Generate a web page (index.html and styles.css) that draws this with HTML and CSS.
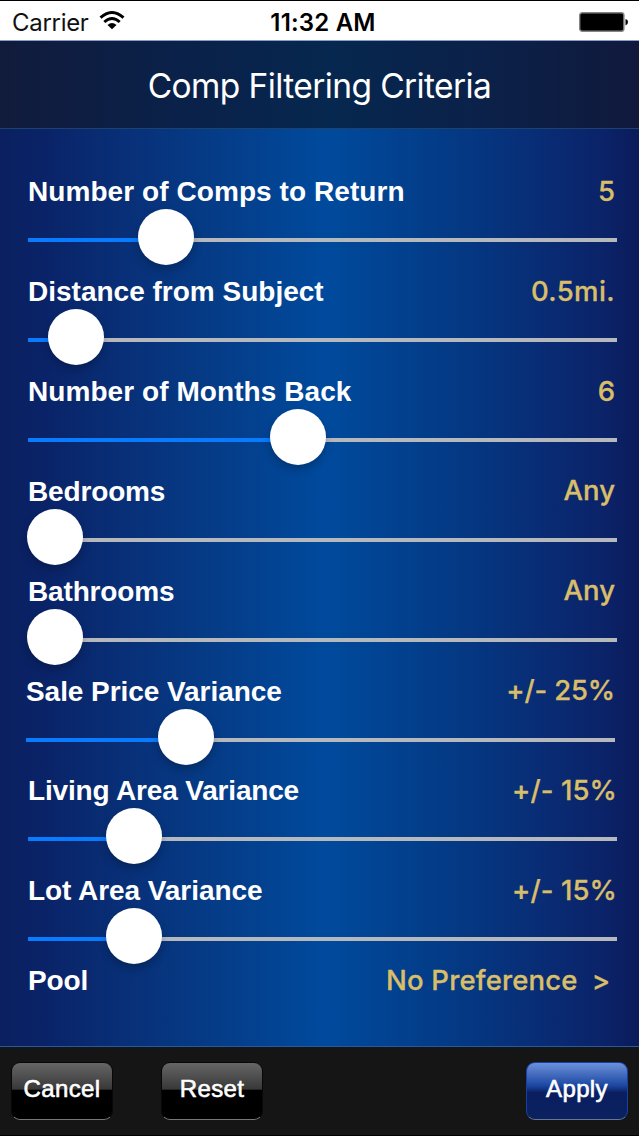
FILE: index.html
```html
<!DOCTYPE html>
<html lang="en">
<head>
<meta charset="utf-8">
<title>Comp Filtering Criteria</title>
<link rel="stylesheet" href="styles.css">
</head>
<body>
<div class="screen">
  <div class="status">
    <div class="carrier"><span>Carrier</span>
      <svg class="wifi" width="26" height="19" viewBox="0 0 26 19"><path d="M1.500 6.600Q13-3.600 24.500 6.600" fill="none" stroke="#000" stroke-width="2.900"/><path d="M5.300 11Q13 4.200 20.700 11" fill="none" stroke="#000" stroke-width="2.900"/><path d="M8.500 14Q13 10 17.500 14L13 18.300Z"/></svg>
    </div>
    <div class="time">11:32 AM</div>
    <svg class="battery" width="50" height="20" viewBox="0 0 50 20"><rect x=".7" y=".7" width="44.200" height="18.600" rx="2.500" fill="#000" stroke="#858585" stroke-width="1.400"/><path d="M46.500 7Q49 7.500 49 10T46.500 13.500Z"/></svg>
  </div>
  <header class="header"><h1>Comp Filtering Criteria</h1></header>
  <main class="criteria">
    <section class="row"><div class="line"><span class="label comps">Number of Comps to Return</span><span class="value">5</span></div><div class="slider" style="--pos:138px"><i class="thumb"></i></div></section>
    <section class="row"><div class="line"><span class="label">Distance from Subject</span><span class="value miles">0.5mi.</span></div><div class="slider" style="--pos:48px"><i class="thumb"></i></div></section>
    <section class="row"><div class="line"><span class="label comps">Number of Months Back</span><span class="value">6</span></div><div class="slider" style="--pos:270px"><i class="thumb"></i></div></section>
    <section class="row"><div class="line"><span class="label tight">Bedrooms</span><span class="value">Any</span></div><div class="slider minimum" style="--pos:26.500px"><i class="thumb"></i></div></section>
    <section class="row"><div class="line"><span class="label tight">Bathrooms</span><span class="value">Any</span></div><div class="slider minimum" style="--pos:26.500px"><i class="thumb"></i></div></section>
    <section class="row shifted"><div class="line"><span class="label price">Sale Price Variance</span><span class="value percent">+/- 25%</span></div><div class="slider" style="--pos:160px"><i class="thumb"></i></div></section>
    <section class="row"><div class="line"><span class="label living">Living Area Variance</span><span class="value percent wide">+/- 15%</span></div><div class="slider" style="--pos:106px"><i class="thumb"></i></div></section>
    <section class="row lot-row"><div class="line"><span class="label price">Lot Area Variance</span><span class="value percent wide">+/- 15%</span></div><div class="slider" style="--pos:106px"><i class="thumb"></i></div></section>
    <section class="row"><div class="line"><span class="label tight">Pool</span><span class="value choice"><span class="preference">No Preference</span><span class="chevron">&gt;</span></span></div></section>
  </main>
  <footer class="toolbar">
    <button class="button">Cancel</button><button class="button reset">Reset</button><button class="button apply">Apply</button>
  </footer>
</div>
</body>
</html>
```
FILE: styles.css
```css
* { box-sizing: border-box; }
body { margin: 0; }
.screen {
  width: 639px; height: 1136px; overflow: hidden;
  display: flex; flex-direction: column;
  background: linear-gradient(90deg, #0a205f 0%, #0a2368 7%, #083078 20%, #053d89 35%, #004a9d 51%, #033d89 67%, #082e77 83%, #0b2268 95%, #0b1b5a 100%);
}
.status {
  height: 41px; flex: none; display: grid; grid-template-columns: 1fr auto 1fr; align-items: center;
  padding: 3px 10px 0 13px; background: #fff; border-top: 1px solid #000; border-bottom: 1px solid #879fc2;
  font-family: Inter, sans-serif; font-size: 24px; color: #111;
}
.carrier { display: flex; align-items: center; gap: 10px; letter-spacing: -.3px; margin: 0 0 0 -1px; }
.wifi { margin-top: -4px; }
.time { color: #000; font-weight: 600; font-size: 24px; letter-spacing: .2px; margin: 0 -2px 0 2px; }
.battery { justify-self: end; margin-top: -1px; }
.header {
  height: 88px; flex: none; display: grid; place-items: center; padding-top: 2px;
  background: linear-gradient(90deg, #111b3c, #0a2149 28%, #06274f 52%, #0b2149 75%, #10193c);
  border-bottom: 1px solid #1c426f;
}
h1 { margin: 0; color: #fff; font: 400 33.500px/40px Inter, sans-serif; letter-spacing: -.6px; white-space: nowrap; }
.criteria { height: 918px; flex: none; padding: 42.400px 22px 0 28px; border-bottom: 1px solid #28599c; }
.row { height: 99.850px; }
.line { height: 40px; display: flex; justify-content: space-between; align-items: center; white-space: nowrap; }
.label { color: #fff; font: bold 28px/38px "Liberation Sans", Arial, sans-serif; padding-top: 2px; }
.comps { letter-spacing: .07px; }
.tight { letter-spacing: -.15px; }
.price { letter-spacing: -.06px; }
.living { letter-spacing: -.17px; }
.value { color: #d9be6a; font: 500 27.500px/38px Inter, sans-serif; -webkit-text-stroke: .3px #d9be6a; padding: 0 2px 1px 0; }
.miles { letter-spacing: .4px; }
.percent { letter-spacing: -.15px; padding-right: 0; }
.wide { letter-spacing: .1px; }
.shifted { margin: 0 2px 0 -2px; }
.lot-row { height: 90px; }
.slider {
  display: flex; width: 589px; height: 56px; margin-top: -2px; padding-left: max(0px, calc(var(--pos) - 28px));
  background: linear-gradient(90deg, #087bff var(--pos), #b5b8bd var(--pos)) 0 29px / 100% 4px no-repeat;
}
.thumb { flex: none; width: 56px; height: 56px; border-radius: 50%; background: #fff; box-shadow: 0 5px 9px rgba(0,0,0,.22); }
.minimum .thumb { margin-left: -1.500px; }
.choice { display: flex; gap: 14px; padding-right: 7px; }
.preference { letter-spacing: .17px; }
.toolbar { height: 89px; flex: none; display: flex; align-items: flex-start; padding: 15px 11px 0; background: #151516; border-bottom: 1px solid #000; }
.button {
  width: 102px; height: 58px; padding: 0 0 4px; border: 1px solid #080808; border-bottom: 1px solid #777; border-radius: 9px;
  background: linear-gradient(#666 0, #383838 47%, #000 48%);
  color: #fff; font: 400 24px/30px "Liberation Sans", Arial, sans-serif; letter-spacing: .35px; -webkit-text-stroke: .6px #fff; white-space: nowrap;
}
.reset { margin-left: 48px; }
.apply { margin-left: auto; border-color: #1641a2; border-bottom-color: #65759c; background: linear-gradient(#6d91da 0, #1c48a2 40%, #0a1e60 53%, #0b225f); }
```
